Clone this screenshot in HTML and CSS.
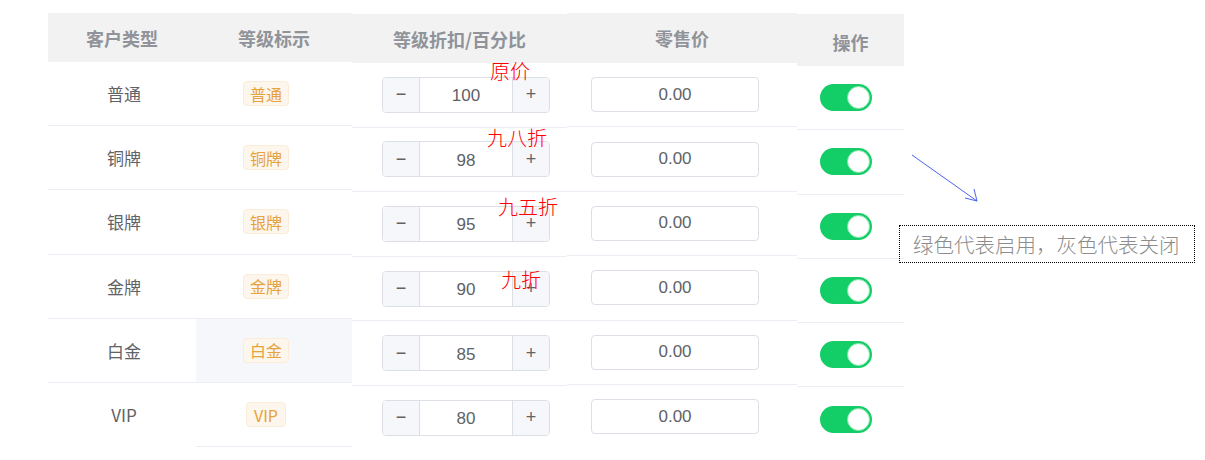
FILE: index.html
```html
<!DOCTYPE html>
<html lang="zh-CN">
<head>
    <meta charset="UTF-8">
    <title>客户等级折扣</title>
    <link rel="stylesheet" href="styles.css">
</head>
<body>
    <div class="page">
        <div class="table">
            <!-- 客户类型 -->
            <div class="col col-type">
                <div class="head">客户类型</div>
                <div class="cell">普通</div>
                <div class="cell">铜牌</div>
                <div class="cell">银牌</div>
                <div class="cell">金牌</div>
                <div class="cell">白金</div>
                <div class="cell last">VIP</div>
            </div>

            <!-- 等级标示 -->
            <div class="col col-tag">
                <div class="head">等级标示</div>
                <div class="cell"><span class="tag">普通</span></div>
                <div class="cell"><span class="tag">铜牌</span></div>
                <div class="cell"><span class="tag">银牌</span></div>
                <div class="cell"><span class="tag">金牌</span></div>
                <div class="cell hover"><span class="tag">白金</span></div>
                <div class="cell"><span class="tag">VIP</span></div>
            </div>

            <!-- 折扣 -->
            <div class="col col-rate">
                <div class="head">等级折扣/百分比</div>
                <div class="cell"><div class="stepper"><span class="btn">−</span><span class="num">100</span><span class="btn">+</span></div></div>
                <div class="cell"><div class="stepper"><span class="btn">−</span><span class="num">98</span><span class="btn">+</span></div></div>
                <div class="cell"><div class="stepper"><span class="btn">−</span><span class="num">95</span><span class="btn">+</span></div></div>
                <div class="cell"><div class="stepper"><span class="btn">−</span><span class="num">90</span><span class="btn">+</span></div></div>
                <div class="cell"><div class="stepper"><span class="btn">−</span><span class="num">85</span><span class="btn">+</span></div></div>
                <div class="cell last"><div class="stepper"><span class="btn">−</span><span class="num">80</span><span class="btn">+</span></div></div>
            </div>

            <!-- 零售价 -->
            <div class="col col-price">
                <div class="head">零售价</div>
                <div class="cell"><div class="price">0.00</div></div>
                <div class="cell"><div class="price">0.00</div></div>
                <div class="cell"><div class="price">0.00</div></div>
                <div class="cell"><div class="price">0.00</div></div>
                <div class="cell"><div class="price">0.00</div></div>
                <div class="cell last"><div class="price">0.00</div></div>
            </div>

            <!-- 操作 -->
            <div class="col col-op">
                <div class="head">操作</div>
                <div class="cell"><span class="switch"></span></div>
                <div class="cell"><span class="switch"></span></div>
                <div class="cell"><span class="switch"></span></div>
                <div class="cell"><span class="switch"></span></div>
                <div class="cell"><span class="switch"></span></div>
                <div class="cell last"><span class="switch"></span></div>
            </div>
        </div>

        <!-- 标注 -->
        <span class="mark mark-1">原价</span>
        <span class="mark mark-2">九八折</span>
        <span class="mark mark-3">九五折</span>
        <span class="mark mark-4">九折</span>

        <svg class="arrow" width="80" height="60" viewBox="0 0 80 60">
            <path d="M2 2 L67 48" stroke="#4a63f0" stroke-width="1" fill="none"/>
            <path d="M55 45 L67 48 L64 36" stroke="#4a63f0" stroke-width="1" fill="none"/>
        </svg>
        <div class="note">绿色代表启用，灰色代表关闭</div>
    </div>
</body>
</html>
```

FILE: styles.css
```css
body {
    margin: 0;
    background-color: #fff;
    font-family: "Noto Sans CJK SC", "Liberation Sans", sans-serif;
}
.page {
    position: relative;
    width: 1205px;
    height: 460px;
}
.table {
    display: flex;
    align-items: flex-start;
    padding: 13px 0 0 48px;
}
.col {
    display: flex;
    flex-direction: column;
}
.head {
    display: flex;
    align-items: center;
    justify-content: center;
    background-color: #f2f2f2;
    color: #909399;
    font-size: 18px;
    font-weight: bold;
    height: 49px;
}
.cell {
    display: flex;
    align-items: center;
    justify-content: center;
    box-sizing: border-box;
    height: 64.2px;
    border-bottom: 1px solid #ebeef5;
    color: #606266;
    font-size: 17px;
}
.cell.last {
    border-bottom-color: transparent;
}
.cell.hover {
    background-color: #f5f7fa;
}

.col-type { width: 148px; }
.col-type .cell { padding-left: 4px; }
.col-tag { width: 156px; }
.col-tag .cell { padding-right: 16px; }
.col-rate { width: 215px; margin-top: 1px; }
.col-rate .cell { height: 64.6px; padding-left: 13px; }
.col-price { width: 230px; }
.col-price .head { height: 50px; }
.col-price .cell { height: 64.4px; padding-right: 14px; }
.col-op { width: 107px; margin-top: 1px; }
.col-op .head { height: 52px; padding-top: 4px; box-sizing: border-box; }
.col-op .cell { height: 64.3px; padding-right: 10px; }

.tag {
    display: inline-flex;
    align-items: center;
    justify-content: center;
    box-sizing: border-box;
    width: 46px;
    height: 25px;
    background-color: #fdf6ec;
    border: 1px solid #faecd8;
    border-radius: 4px;
    color: #e6a23c;
    font-size: 16px;
}
.col-tag .cell:last-child .tag {
    width: 40px;
}

.stepper {
    display: flex;
    box-sizing: border-box;
    width: 168px;
    height: 36px;
    border: 1px solid #dcdfe6;
    border-radius: 4px;
    overflow: hidden;
    font-family: "Liberation Sans", "Noto Sans CJK SC", sans-serif;
}
.stepper .btn {
    display: flex;
    align-items: center;
    justify-content: center;
    width: 36px;
    background-color: #f5f7fa;
    color: #606266;
    font-size: 18px;
}
.stepper .btn:first-child { border-right: 1px solid #dcdfe6; }
.stepper .btn:last-child { border-left: 1px solid #dcdfe6; }
.stepper .num {
    flex: 1;
    display: flex;
    align-items: center;
    justify-content: center;
    padding-top: 3px;
    color: #606266;
    font-size: 17px;
}

.price {
    display: flex;
    align-items: center;
    justify-content: center;
    box-sizing: border-box;
    width: 168px;
    height: 35px;
    border: 1px solid #dcdfe6;
    border-radius: 4px;
    color: #606266;
    font-family: "Liberation Sans", "Noto Sans CJK SC", sans-serif;
    font-size: 17px;
}

.switch {
    position: relative;
    display: inline-block;
    width: 52px;
    height: 27px;
    border-radius: 14px;
    background-color: #13ce66;
}
.switch::after {
    content: "";
    position: absolute;
    top: 2px;
    right: 2px;
    width: 21px;
    height: 21px;
    border: 1px solid #7ee3a8;
    border-radius: 50%;
    background-color: #fff;
}

/* 标注 */
.mark {
    position: absolute;
    color: #ff0000;
    font-size: 20px;
    font-weight: 300;
    line-height: 20px;
}
.mark-1 { left: 490px; top: 61px; }
.mark-2 { left: 487px; top: 128px; }
.mark-3 { left: 498px; top: 197px; }
.mark-4 { left: 501px; top: 270px; }

.arrow {
    position: absolute;
    left: 910px;
    top: 153px;
}
.note {
    position: absolute;
    left: 899px;
    top: 225px;
    box-sizing: border-box;
    width: 296px;
    height: 38px;
    padding-left: 13px;
    border: 1px dotted #000;
    color: #8c8c8c;
    font-size: 20.5px;
    font-weight: 300;
    line-height: 36px;
    white-space: nowrap;
}
```
